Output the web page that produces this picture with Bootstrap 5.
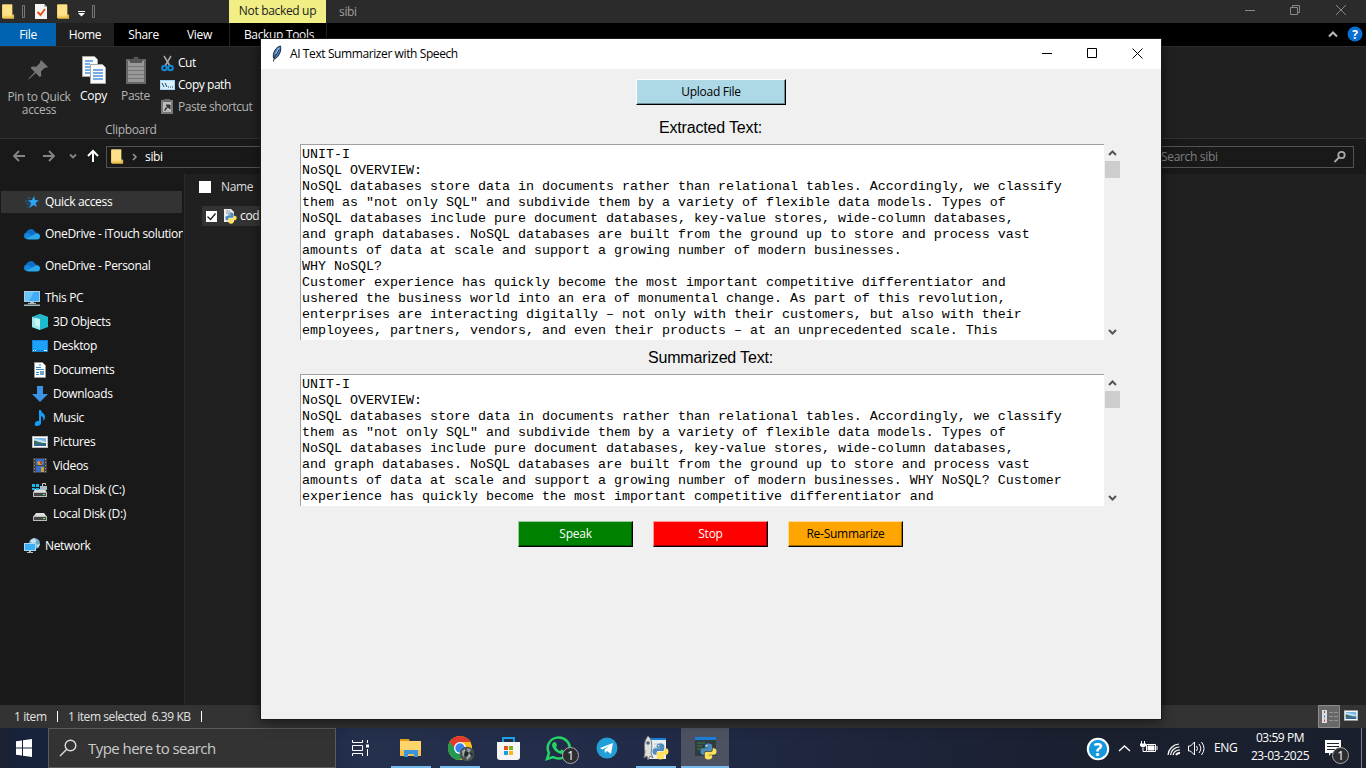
<!DOCTYPE html>
<html lang="en">
<head>
<meta charset="utf-8">
<title>AI Text Summarizer with Speech</title>
<meta name="viewport" content="width=device-width, initial-scale=1">
<link href="https://cdn.jsdelivr.net/npm/bootstrap@5.3.0/dist/css/bootstrap.min.css" rel="stylesheet">
<style>
body{font-family:"Open Sans","Noto Sans",sans-serif;font-size:12px;line-height:16px;letter-spacing:-.33px;background:#202020;color:#fff;width:1366px;height:768px;overflow:hidden}
svg{display:block;flex:none}
.ex-title{height:23px;background:#2b2b2b;color:#a0a0a0}
.ex-badge{width:97px;height:23px;background:#f0ee84;color:#222;line-height:21px}
.ex-tabs{height:23px;background:#000;line-height:24px;overflow:hidden}
.ex-tabs>div{text-align:center}
.tab-file{width:56px;background:#0063b1}
.tab-home{width:58px;background:#202020}
.ribbon{height:93px;background:#202020;border-top:1px solid #2d2d2d;border-bottom:1px solid #333}
.ribbon .dim{color:#b4b4b4}
.navrow{height:35px;background:#191919}
.addr{height:22px;border:1px solid #535353}
.side{width:185px;background:#191919;border-right:1px solid #2b2b2b;padding-top:16px}
.side .item{height:24px;padding-left:24px;margin-right:1px;gap:5px;overflow:hidden}
.side .sub{padding-left:32px}
.side .sel{background:linear-gradient(#333,#333) 1px 1px/181px 22px no-repeat}
.filerow{height:20px;background:#333;margin:9px 0 0 17px;padding-left:4px}
.status{height:23px;background:#333;color:#e2e2e2}
.bar-v{width:1px;height:11px;background:#fff}
.taskbar{height:40px;background:linear-gradient(90deg,#1b2231 0,#17233b 22px,#1e2b48 330px,#25304d 360px,#222c49 600px,#1f2740 800px,#1b2030 1060px,#1a1f2d 1366px)}
.tb-search{width:288px;height:40px;background:#333;border:1px solid #5c5c5c;font-size:15px;color:#ccc;letter-spacing:-.55px}
.tb-app{width:48px;height:40px;position:relative}
.tb-app.open::after{content:"";position:absolute;left:4px;right:4px;bottom:0;height:2px;background:#76b9ed}
.tb-app.active{background:#4c5261}
.tb-app.active::after{left:0;right:0}
.count{position:absolute;width:17px;height:17px;border-radius:50%;background:#2b2d31;border:1px solid #aaa;font-size:12px;line-height:15px;text-align:center;color:#fff}
.tkwin{left:261px;top:39px;width:900px;height:680px;background:#f0f0f0;color:#000;box-shadow:0 0 0 1px #1a1a1a,0 3px 12px rgba(0,0,0,.55)}
.tk-title{height:30px;background:#fff}
.tkbtn{height:26px;width:115px;border:1px solid #000;border-top-color:#fff9;border-left-color:#fff9;box-shadow:inset -1px -1px rgba(0,0,0,.35);border-radius:0;font-size:12px;line-height:24px;padding:0;letter-spacing:-.25px;text-align:center;color:#000}
.tk-upload{width:150px;background:#add8e6;border-top-color:#fff;border-left-color:#fff}
.tk-label{font-family:"Liberation Sans",Arial,sans-serif;font-size:16px;letter-spacing:-.17px;line-height:20px;text-align:center;padding-right:1px}
.tk-area{margin-left:39px;width:820px;gap:1px}
.tk-text{width:804px;background:#fff;border-top:1px solid #a0a0a0;border-left:1px solid #a0a0a0;padding:2px 0 0 1px;overflow:hidden}
.tk-text pre{font-family:"Liberation Mono","Courier New",monospace;font-size:13.333px;line-height:16px;letter-spacing:0;margin:0;overflow:hidden;color:#000}
.tk-scroll{width:15px}
.thumb{height:17px;background:#cdcdcd}
</style>
</head>
<body>
<svg width="0" height="0" class="position-absolute">
  <symbol id="folder" viewBox="0 0 14 17"><path d="M0 1h11v11h2v4H1L0 15z" fill="#f2cf63"/><path d="M1 1h10v12H1z" fill="#ffe18a"/><path d="M11 12h2v4H1v-1h10z" fill="#e3b645"/></symbol>
  <symbol id="cloud" viewBox="0 0 16 10"><path d="M1 8a3 3 0 0 1 1-5 5 5 0 0 1 9-1l4 4-7 3z" fill="#0f6cc9"/><path d="M0 6.5A3.3 3.3 0 0 1 5 4l7 5.5H3A3 3 0 0 1 0 6.5z" fill="#1585dc"/><path d="M2 9l9-4.5A3 3 0 0 1 16 7c0 2-1 3-3 3H4z" fill="#28a8ea"/></symbol>
  <symbol id="python" viewBox="0 0 16 16"><path d="M8 .5C5 .5 4.5 2 4.500 3v1.500H8V5H3C1 5 .5 6.500.500 8.200S1.500 11 3 11h1.300V9.200C4.300 8 5 7.500 6.300 7.500h3.500c1 0 1.700-.6 1.700-1.700V3C11.500 1.500 10.500.5 8 .5z" fill="#4b8bbe"/><path d="M8 15.500c3 0 3.500-1.500 3.500-2.500v-1.500H8V11h5c2 0 2.500-1.500 2.500-3.200S14.500 5 13 5h-1v1c0 1.500-.8 2.200-2 2.200H6.400C5.200 8.200 4.500 9 4.500 10v3c0 1.500 1 2.500 3.500 2.500z" fill="#ffe05a"/><circle cx="6.300" cy="2.500" r=".7" fill="#fff"/></symbol>
  <symbol id="photo" viewBox="0 0 16 12"><path d="M0 0h16v12H0z" fill="#bbb"/><path d="M1 1h14v10H1z" fill="#fff"/><path d="M2 2h12v8H2z" fill="#79b8ea"/><path d="M2 3c4 0 8 1 12 3v2H2z" fill="#c5e5f5"/><path d="M2 4.500C5 5 8 7 14 7v1H2z" fill="#3e6b63"/><path d="M2 8h12v2H2z" fill="#2d6794"/></symbol>
</svg>

<div class="d-flex flex-column vh-100">
  <div class="ex-title d-flex align-items-center">
    <svg width="229" height="23" viewBox="0 0 229 23">
      <use href="#folder" x="2" y="3" width="13" height="17"/>
      <path d="M22.500 5.500h2v12h-2zM92.500 5.500h2v12h-2z" fill="none" stroke="#777"/>
      <path d="M35 4h9l3 3v12H35z" fill="#f4f4f4"/><path d="M44 4v3h3" fill="#bbb"/><path d="M37.500 12l3 3 4.500-6" fill="none" stroke="#e8501d" stroke-width="2"/>
      <use href="#folder" x="57" y="3" width="13" height="17"/>
      <path d="M78 11.500h7" stroke="#fff"/><path d="M78 13h7l-3.500 3.500z" fill="#fff"/>
    </svg>
    <div class="ex-badge text-center">Not backed up</div>
    <span style="margin-left:13px">sibi</span>
    <svg class="ms-auto" width="130" height="23" viewBox="0 0 130 23" fill="none" stroke="#888"><path d="M9 10.500h10M54.500 7.500h7v7h-7zM56.500 7.500v-2h7v7h-2M100 5l10 10M110 5l-10 10"/></svg>
  </div>
  <div class="ex-tabs d-flex">
    <div class="tab-file">File</div><div class="tab-home">Home</div>
    <div style="width:59px">Share</div><div style="width:53px">View</div>
    <div style="width:100px;margin-left:3px;background:linear-gradient(#222,#222) 0 0/1px 100% no-repeat,linear-gradient(#222,#222) 97px 0/1px 100% no-repeat">Backup Tools</div>
    <svg class="ms-auto" width="46" height="23" viewBox="0 0 46 23"><path d="M9 13.500l4-4 4 4" fill="none" stroke="#bbb" stroke-width="2"/><circle cx="35" cy="11" r="7.500" fill="#0a6fd0"/><text x="35" y="15.500" fill="#fff" font-size="12" font-weight="700" text-anchor="middle">?</text></svg>
  </div>
  <div class="ribbon d-flex flex-column">
    <div class="d-flex" style="height:75px">
      <div class="text-center dim" style="width:78px;padding-top:10px">
        <svg class="mx-auto" style="margin-bottom:5px" width="24" height="26" viewBox="0 0 24 26"><path d="M14 3l7 7-2 1-1-.5-4 4 .3 4.500-1.600 1-4-4-6.500 6-1 .5.500-1 6-6.500-4-4 1-1.600 4.500.3 4-4L13 5z" fill="#777"/></svg><div style="line-height:13px;padding-top:2px">Pin to Quick<br>access</div>
      </div>
      <div class="text-center" style="width:31px;padding-top:9px;white-space:nowrap">
        <svg class="mx-auto" style="margin-bottom:3px" width="26" height="29" viewBox="0 0 26 29"><g stroke="#aaa"><path d="M1.500.500h12l3 3v17h-15z" fill="#fafafa"/><path d="M9.500 8.500h12l3 3v16h-15z" fill="#fafafa"/></g><path d="M4 5h8M4 8h5M4 11h5M4 14h5M4 17h5M12 14h10M12 17h10M12 20h10M12 23h10" stroke="#4d94dd" stroke-width="1.300"/></svg>Copy
      </div>
      <div class="text-center dim" style="width:52px;padding:9px 0 0 1px">
        <svg class="mx-auto" style="margin-bottom:3px" width="22" height="29" viewBox="0 0 22 29"><path d="M1 3h20v25H1z" fill="#666"/><path d="M3 5h16v21H3z" fill="#999"/><path d="M5 3h3l1-2h4l1 2h3v4H5z" fill="#555"/><path d="M3 10.500h16M3 14.500h16M3 18.500h16M3 22.500h16" stroke="#777"/></svg>Paste
      </div>
      <div class="d-flex flex-column" style="padding-top:5px;letter-spacing:-.45px">
        <div class="d-flex align-items-center gap-1" style="height:22px"><svg width="13" height="17" viewBox="0 0 13 17"><path d="M3 1l6 10M10 1L4 11" stroke="#aaa" stroke-width="1.500"/><g fill="none" stroke="#168bd4" stroke-width="2"><circle cx="3.500" cy="13" r="2.300"/><circle cx="9.500" cy="13" r="2.300"/></g></svg>Cut</div>
        <div class="d-flex align-items-center gap-1" style="height:22px"><svg width="15" height="10" viewBox="0 0 15 10" style="margin:0 -1px"><path d="M0 0h15v10H0z" fill="#a9d8f6"/><path d="M1 1h13v8H1z" fill="#d8effc"/><path d="M2 3l2 4M5 3l2 4M8 7h1M10 7h1M12 7h1" stroke="#16496f"/></svg>Copy path</div>
        <div class="d-flex align-items-center gap-1 dim" style="height:22px"><svg width="13" height="16" viewBox="0 0 13 16"><path d="M0 1h12v14H0z" fill="#777"/><path d="M2 3h8v10H2z" fill="#bbb"/><path d="M3 0h6v3H3z" fill="#666"/><path d="M4 12c0-3 1-4 3-4M5 6h4v4z" stroke="#333" fill="#333"/></svg>Paste shortcut</div>
      </div>
    </div>
    <div class="dim" style="margin-left:105px;line-height:15px">Clipboard</div>
  </div>
  <div class="navrow d-flex align-items-center">
    <svg width="106" height="35" viewBox="0 0 106 35" fill="none" stroke="#858585" stroke-width="1.800"><path d="M25 17H14M19 12l-5 5 5 5M43 17h11M49 12l5 5-5 5"/><path d="M70 15.500l3 3 3-3"/><path d="M93 23V12M88 17l5-5 5 5" stroke="#fff" stroke-width="2"/></svg>
    <div class="addr d-flex align-items-center" style="width:1005px"><svg width="38" height="20" viewBox="0 0 38 20"><use href="#folder" x="4" y="1" width="13" height="17"/><path d="M26 7l3 3-3 3" fill="none" stroke="#999" stroke-width="1.500"/></svg>sibi</div>
    <div class="addr d-flex align-items-center justify-content-between ms-auto" style="width:205px;margin-right:12px;padding:0 6px 0 11px;color:#808080">Search sibi<svg width="14" height="14" viewBox="0 0 14 14" fill="none" stroke="#aaa" stroke-width="1.800"><circle cx="8.500" cy="5" r="3.200"/><path d="M6 7.500L1.500 12"/></svg></div>
  </div>
  <div class="d-flex flex-grow-1">
    <div class="side flex-shrink-0 text-nowrap">
      <div class="item sel d-flex align-items-center"><svg width="16" height="16" viewBox="0 0 16 16"><path d="M10 2l1 4 4 .5-3.500 2.500 1.500 4-3.500-2-4 3 1.500-5L4 6.500l4-.5z" fill="#2ba6f5"/><path d="M3 4h4M1 7h4M2 10h4M3 13h3" stroke="#17649d"/></svg>Quick access</div>
      <div class="item d-flex align-items-center mt-2"><svg width="16" height="11"><use href="#cloud"/></svg>OneDrive - iTouch solution</div>
      <div class="item d-flex align-items-center mt-2"><svg width="16" height="11"><use href="#cloud"/></svg>OneDrive - Personal</div>
      <div class="item d-flex align-items-center mt-2"><svg width="16" height="15" viewBox="0 0 16 15"><path d="M0 0h16v11H0z" fill="#a8cde2"/><path d="M1 1h14v9H1z" fill="#3eacf6"/><path d="M1 1h9l-5 9H1z" fill="#6bc5fa"/><path d="M6 11h4v1h2v1H4v-1h2zM0 13.500h16V15H0z" fill="#a8b8c0"/></svg>This PC</div>
      <div class="item sub d-flex align-items-center"><svg width="16" height="16" viewBox="0 0 16 16"><path d="M0 3l8-3 8 3v10l-8 3-8-3z" fill="#1bbbd0"/><path d="M0 3l8 2v11l-8-3z" fill="#9ee8ee"/><path d="M0 3l8-3 8 3-8 2z" fill="#2bb3c6"/><path d="M3 4l5 1v8l-5-2z" fill="#c9f5f5"/></svg>3D Objects</div>
      <div class="item sub d-flex align-items-center"><svg width="16" height="12" viewBox="0 0 16 12"><path d="M0 0h16v12H0z" fill="#1583d8"/><path d="M1 1h14v9H1z" fill="#1da1fb"/><path d="M1 10.500h1M3 10.500h1M12 10.500h3" stroke="#fff"/></svg>Desktop</div>
      <div class="item sub d-flex align-items-center"><svg width="16" height="16" viewBox="0 0 16 16"><path d="M2.500.500h8l3 3v12h-11z" fill="#fff" stroke="#999"/><path d="M7 3h2M4 5.500h5M4 7.500h8M4 10.500h3M4 12.500h3" stroke="#3289cc"/><path d="M8 9h4v4H8z" fill="#6ba3c8"/></svg>Documents</div>
      <div class="item sub d-flex align-items-center"><svg width="16" height="16" viewBox="0 0 16 16"><path d="M5 0h6v8h5l-8 8-8-8h5z" fill="#3a93e4"/></svg>Downloads</div>
      <div class="item sub d-flex align-items-center"><svg width="16" height="16" viewBox="0 0 16 16"><path d="M7 0h2c0 3 4 3 4 7 0 2-1 3-2 4 1-3 0-4-2-5v7c0 2-2 3-4 3s-3-1-2-3 2-2 4-2z" fill="#10a0f5"/></svg>Music</div>
      <div class="item sub d-flex align-items-center"><svg width="16" height="12"><use href="#photo"/></svg>Pictures</div>
      <div class="item sub d-flex align-items-center"><svg width="16" height="16" viewBox="0 0 16 16"><path d="M1 0h14v15H1z" fill="#444"/><path d="M4 1h8v6H4zM4 8h8v6H4z" fill="#366bd0"/><path d="M5 4l3-1 3 2-2 2H6zM9 9h3v5H9z" fill="#c9a234"/><path d="M8 3h2v3H8z" fill="#bd4334"/><path d="M2.500 1v14M13.500 1v14" stroke="#999" stroke-dasharray="1 2"/></svg>Videos</div>
      <div class="item sub d-flex align-items-center"><svg width="16" height="16" viewBox="0 0 16 16"><path d="M3 7h10l2 4H1z" fill="#ddd"/><path d="M1 10h14v5H1z" fill="#bbb"/><path d="M2 11h12v3H2z" fill="#444"/><path d="M11 12h2v1h-2z" fill="#4f5"/><path d="M0 2h3v3H0zM4 2h3v3H4zM0 6h3v2H0zM4 6h3v2H4z" fill="#15baf2"/><path d="M8 4h7v4H8z" fill="#a9bdc7"/><path d="M10.500 4V1.500h3V3" stroke="#ccc" fill="none"/></svg>Local Disk (C:)</div>
      <div class="item sub d-flex align-items-center"><svg width="16" height="16" viewBox="0 0 16 16"><path d="M4 7h8l3 4H1z" fill="#ddd"/><path d="M1 10h14v5H1z" fill="#bbb"/><path d="M2 11h12v3H2z" fill="#444"/><path d="M11 12h2v1h-2z" fill="#4f5"/></svg>Local Disk (D:)</div>
      <div class="item d-flex align-items-center mt-2"><svg width="16" height="16" viewBox="0 0 16 16"><circle cx="10.500" cy="5.500" r="5.500" fill="#6fa5bf"/><path d="M6 3l4-3 3 3-4 3zM12 7l4-1-2 4z" fill="#c2e2ed"/><path d="M0 5h12v8H0z" fill="#a8d9f5"/><path d="M1 6h10v6H1z" fill="#3bb0f5"/><path d="M5 13h2v1h2v1H3v-1h2z" fill="#bbb"/></svg>Network</div>
    </div>
    <div style="width:76px" class="flex-shrink-0 text-nowrap overflow-hidden">
      <div class="d-flex align-items-center" style="height:23px;padding:3px 0 0 14px;color:#dedede;gap:10px"><svg width="12" height="12"><path d="M0 0h12v12H0z" fill="#fff"/></svg>Name</div>
      <div class="filerow d-flex align-items-center"><svg width="11" height="11"><path d="M0 0h11v11H0z" fill="#fff"/><path d="M1.500 5.500l3 3 5-6" fill="none" stroke="#222" stroke-width="1.300"/></svg><svg style="margin:0 3px 0 6px" width="14" height="16" viewBox="0 0 14 16"><path d="M1 1h7l3 3v10H1z" fill="#eee"/><path d="M3 3h4M3 5h5" stroke="#999"/><use href="#python" x="2" y="4" width="12" height="12"/></svg>cod</div>
    </div>
    <div class="flex-grow-1"></div>
  </div>
  <div class="status d-flex align-items-center flex-shrink-0" style="letter-spacing:-.42px">
    <span style="width:57px;padding-left:14px">1 item</span><span class="bar-v"></span>
    <span style="width:143px;padding-left:10px;white-space:pre">1 item selected  6.39 KB</span><span class="bar-v"></span>
    <svg class="ms-auto" width="48" height="23" viewBox="0 0 48 23"><path d="M.500.500h21v22H.500z" fill="#686868" stroke="#8d8d8d"/><path d="M4 5h5v13H4z" fill="#ddd"/><path d="M6 7h1" stroke="#333" stroke-width="1.500"/><path d="M6 11.500h1" stroke="#258dd8" stroke-width="2"/><path d="M6 15.500h1" stroke="#d33" stroke-width="2"/><path d="M11 7.500h4M16 7.500h4M11 11.500h4M16 11.500h4M11 15.500h4M16 15.500h4" stroke="#949494"/><use href="#photo" x="26" y="5" width="14" height="11"/></svg>
  </div>
  <div class="taskbar d-flex flex-shrink-0">
    <svg width="48" height="40" viewBox="0 0 48 40"><path d="M16 13.200l6-.8v7.100h-6zM23 12.200l9-1.200v8.500h-9zM16 20.500h6v7.100l-6-.8zM23 20.500h9V29l-9-1.200z" fill="#fff"/></svg>
    <div class="tb-search d-flex align-items-center"><svg width="39" height="38" viewBox="0 0 39 38" fill="none" stroke="#ddd" stroke-width="1.400"><circle cx="21.500" cy="16.500" r="5.300"/><path d="M17.500 20.500L11 27"/></svg>Type here to search</div>
    <div class="d-flex" style="gap:1px;margin-left:2px">
      <div class="tb-app"><svg width="48" height="40" viewBox="0 0 48 40" fill="none" stroke="#fff"><path d="M14.500 12v2.500h10V12M14.500 28v-2.500h10V28M14.500 17.500h10v5h-10zM29.500 12v3M29.500 21v7"/><path d="M28 16.500h3v3h-3z" fill="#fff" stroke="none"/></svg></div>
      <div class="tb-app open"><svg width="48" height="40" viewBox="0 0 48 40"><path d="M13 11h9l1 3H13z" fill="#dfa01b"/><path d="M13 13h21v15H13z" fill="#ffd469"/><path d="M13 22h21v6H13z" fill="#f5bf4b"/><path d="M17 29v-7h14v7h-4v-3h-6v3z" fill="#3d94dc"/></svg></div>
      <div class="tb-app open"><svg width="48" height="40" viewBox="0 0 48 40"><circle cx="24" cy="20" r="12" fill="#fbc116"/><path d="M13.600 14a12 12 0 0 1 20.800 0H24l-5 9z" fill="#e33b2e"/><path d="M13.600 14A12 12 0 0 0 24 32l5-9-9-1z" fill="#229a51"/><circle cx="24" cy="20" r="6" fill="#fff"/><circle cx="24" cy="20" r="4.700" fill="#3c82ee"/><circle cx="31" cy="26" r="7.300" fill="#4a5254"/><path d="M26 23l3-2 1 4-3 4zM31 20l4 2-3 3zM30 28l3-3 2 3-4 4z" fill="#a3a9a9"/><path d="M29 23l4 2-2 4-3-2zM34 24l3 2-1 3z" fill="#1f2425"/></svg></div>
      <div class="tb-app"><svg width="48" height="40" viewBox="0 0 48 40"><path d="M18 15v-5h11v5" fill="none" stroke="#1aa6e6" stroke-width="1.800"/><path d="M12 14h23v15q0 3-3 3H15q-3 0-3-3z" fill="#f5f5f5"/><path d="M19 18h4v4h-4z" fill="#e64e25"/><path d="M24 18h4v4h-4z" fill="#78b711"/><path d="M19 23h4v4h-4z" fill="#15a0df"/><path d="M24 23h4v4h-4z" fill="#fbb514"/></svg></div>
      <div class="tb-app"><svg width="48" height="40" viewBox="0 0 48 40"><path d="M13 31l2-6a11 10.500 0 1 1 4 4z" fill="none" stroke="#25d366" stroke-width="2.500"/><path d="M20 14l2 .5 1 3-1 1.500c1 2 2 3 4 4l1.500-1.500 3 1.500c0 2-2 3-3 3-5-1-9-5-9.500-9 0-1 1-2.500 2-3z" fill="#25d366"/></svg><span class="count" style="left:28px;top:19px">1</span></div>
      <div class="tb-app"><svg width="48" height="40" viewBox="0 0 48 40"><circle cx="24" cy="20" r="10.500" fill="#229fd8"/><path d="M17 20l13-5-2 11-4-3-2 2-.500-3.500 5-4-7 4z" fill="#fff"/></svg></div>
      <div class="tb-app open"><svg width="48" height="40" viewBox="0 0 48 40"><path d="M15 10h19v21H15z" fill="#e9eef2"/><path d="M15 10h19v2H15z" fill="#1a7fd5"/><path d="M22 16h9M22 19h8" stroke="#b4bec6"/><path d="M16 8c5 4 4 12 3 17l2 5-3-2-2 4-1-4-3 2 1-6c-1-6-1-11 3-16z" fill="#dce0e1" stroke="#777"/><circle cx="16" cy="15" r="1.800" fill="#4b6270"/><use href="#python" x="20" y="15" width="17" height="17"/></svg></div>
      <div class="tb-app open active"><svg width="48" height="40" viewBox="0 0 48 40"><path d="M14 10h21v18H14z" fill="#303b3d"/><path d="M14 9h21v3H14z" fill="#1a7fd5"/><path d="M16 15h8M16 18h5M16 21h6" stroke="#388154"/><use href="#python" x="19" y="15" width="17" height="17"/></svg></div>
    </div>
    <div class="ms-auto d-flex align-items-center">
      <svg width="128" height="40" viewBox="0 0 128 40" fill="none" stroke="#fff"><circle cx="12" cy="21" r="10.200" fill="#1597dc" stroke-width="2"/><text x="12" y="27.500" fill="#fff" stroke="none" font-size="18" font-weight="700" text-anchor="middle">?</text><path d="M33 23l5.500-5 5.500 5" stroke-width="1.300"/><path d="M60.500 16.500h9v7h-9z"/><path d="M62 18h6v4h-6z" fill="#fff"/><path d="M71 18v4M55.500 13v3M58.500 13v3M57 20v3.500h3"/><path d="M54 15.500h6v2q-3 4-6 0z" fill="#fff" stroke="none"/><g stroke-width="1.200"><path d="M82 27a12 12 0 0 1 11-11M84.500 27a9 9 0 0 1 9-8M87 27a7 7 0 0 1 7-5"/><path d="M90 27a4 4 0 0 1 4-2" stroke-width="2"/></g><path d="M102.500 18h2l4-4v13l-4-4h-2zM110.500 18q2 2.500 0 5M113 16q3.500 4.500 0 9M115.500 14q5 6.500 0 13"/></svg>
      <span style="width:31px;letter-spacing:-.4px">ENG</span>
      <div class="text-center" style="width:72px;line-height:18px;margin:0 4px 0 -1px;letter-spacing:-.45px;height:38px">03:59 PM<br>23-03-2025</div>
      <div class="tb-app" style="width:46px"><svg width="46" height="40" viewBox="0 0 46 40"><path d="M5 12h16v13H11l-2 3v-3H5z" fill="#fff"/><path d="M7 15.500h12M7 18.500h12M7 21.500h8" stroke="#20242e"/><path d="M41.500 0v40" stroke="#777d8a"/></svg><span class="count" style="left:12px;top:19px">1</span></div>
    </div>
  </div>
</div>

<div class="tkwin position-absolute d-flex flex-column">
  <div class="tk-title d-flex align-items-center">
    <svg width="29" height="30" viewBox="0 0 29 30"><path d="M12.500 19c-1-5 2-11 7-12 1 4-1 10-5 12.500z" fill="#4b82c4" stroke="#1b2330"/><path d="M12.500 22.500l1-4 4.500-8" stroke="#1b2330" fill="none"/><path d="M14.500 15l3.500-6" stroke="#a9cff0"/></svg>
    <span style="letter-spacing:-.4px">AI Text Summarizer with Speech</span>
    <svg class="ms-auto" width="131" height="30" viewBox="0 0 131 30" fill="none" stroke="#000"><path d="M12 14.500h10M57.500 9.500h9v9h-9zM102.500 9.500l10 10M112.500 9.500l-10 10"/></svg>
  </div>
  <button class="btn tkbtn tk-upload mx-auto" style="margin-top:10px">Upload File</button>
  <div class="tk-label" style="margin-top:13px">Extracted Text:</div>
  <div class="tk-area d-flex" style="height:196px;margin-top:6px">
    <div class="tk-text"><pre>UNIT-I
NoSQL OVERVIEW:
NoSQL databases store data in documents rather than relational tables. Accordingly, we classify
them as "not only SQL" and subdivide them by a variety of flexible data models. Types of
NoSQL databases include pure document databases, key-value stores, wide-column databases,
and graph databases. NoSQL databases are built from the ground up to store and process vast
amounts of data at scale and support a growing number of modern businesses.
WHY NoSQL?
Customer experience has quickly become the most important competitive differentiator and
ushered the business world into an era of monumental change. As part of this revolution,
enterprises are interacting digitally – not only with their customers, but also with their
employees, partners, vendors, and even their products – at an unprecedented scale. This</pre></div>
    <div class="tk-scroll d-flex flex-column"><svg width="15" height="17" viewBox="0 0 15 17"><path d="M4 11l3.500-3.500L11 11" fill="none" stroke="#555" stroke-width="2"/></svg><div class="thumb"></div><svg class="mt-auto" width="15" height="17" viewBox="0 0 15 17"><path d="M4 7l3.500 3.500L11 7" fill="none" stroke="#555" stroke-width="2"/></svg></div>
  </div>
  <div class="tk-label" style="margin-top:8px">Summarized Text:</div>
  <div class="tk-area d-flex" style="height:132px;margin-top:6px">
    <div class="tk-text"><pre>UNIT-I
NoSQL OVERVIEW:
NoSQL databases store data in documents rather than relational tables. Accordingly, we classify
them as "not only SQL" and subdivide them by a variety of flexible data models. Types of
NoSQL databases include pure document databases, key-value stores, wide-column databases,
and graph databases. NoSQL databases are built from the ground up to store and process vast
amounts of data at scale and support a growing number of modern businesses. WHY NoSQL? Customer
experience has quickly become the most important competitive differentiator and</pre></div>
    <div class="tk-scroll d-flex flex-column"><svg width="15" height="17" viewBox="0 0 15 17"><path d="M4 11l3.500-3.500L11 11" fill="none" stroke="#555" stroke-width="2"/></svg><div class="thumb"></div><svg class="mt-auto" width="15" height="17" viewBox="0 0 15 17"><path d="M4 7l3.500 3.500L11 7" fill="none" stroke="#555" stroke-width="2"/></svg></div>
  </div>
  <div class="d-flex" style="gap:20px;margin:15px 0 0 257px">
    <button class="btn tkbtn" style="background:#008000;color:#fff">Speak</button>
    <button class="btn tkbtn" style="background:#f00;color:#fff">Stop</button>
    <button class="btn tkbtn" style="background:#ffa500">Re-Summarize</button>
  </div>
</div>
<script src="https://cdn.jsdelivr.net/npm/bootstrap@5.3.0/dist/js/bootstrap.bundle.min.js"></script>
</body>
</html>
